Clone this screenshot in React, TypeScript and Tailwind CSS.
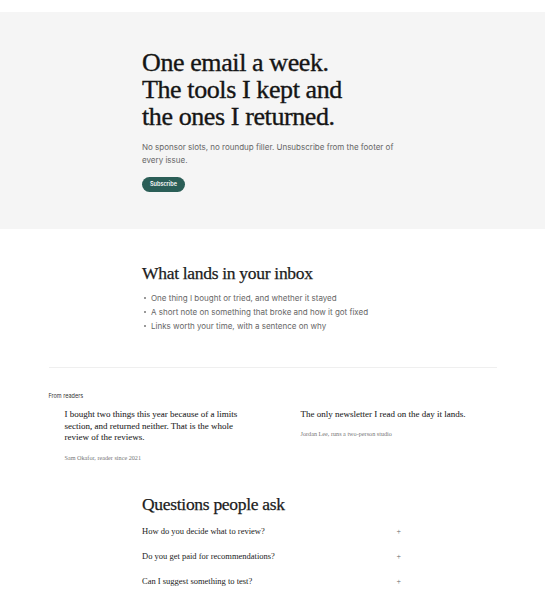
const serif = { fontFamily: '"Liberation Serif", "DejaVu Serif", serif' };

const bullets = [
  "One thing I bought or tried, and whether it stayed",
  "A short note on something that broke and how it got fixed",
  "Links worth your time, with a sentence on why",
];

const quotes = [
  {
    text: "I bought two things this year because of a limits section, and returned neither. That is the whole review of the reviews.",
    who: "Sam Okafor, reader since 2021",
  },
  {
    text: "The only newsletter I read on the day it lands.",
    who: "Jordan Lee, runs a two-person studio",
  },
];

const questions = [
  "How do you decide what to review?",
  "Do you get paid for recommendations?",
  "Can I suggest something to test?",
];

export default function App() {
  return (
    <div className="min-h-screen bg-white pt-[12px] text-[#1c1c1c] font-['Inter','Liberation_Sans',sans-serif]">
      <section className="bg-[#f5f5f5] pt-[37px] pb-[37px]">
        <div className="mx-auto w-[261px]">
          <h1
            style={serif}
            className="h-[81px] text-[26px] leading-[27px] tracking-[-0.4px] text-[#151515] [-webkit-text-stroke:0.35px_#151515]"
          >
            One email a week.
            <br />
            The tools I kept and
            <br />
            the ones I returned.
          </h1>
          <p className="mt-[10.5px] text-[8px] leading-[13px] text-[#666]">
            No sponsor slots, no roundup filler. Unsubscribe from the footer of
            every issue.
          </p>
          <button className="mt-[10.5px] flex h-[15px] items-center rounded-full bg-[#2b5e57] px-[8px] text-[5.5px] font-semibold text-white">
            Subscribe
          </button>
        </div>
      </section>

      <section className="mx-auto w-[261px] pt-[33px]">
        <h2
          style={serif}
          className="text-[17.5px] leading-[22px] tracking-[-0.3px] [-webkit-text-stroke:0.25px_#1c1c1c]"
        >
          What lands in your inbox
        </h2>
        <ul className="mt-[7px] text-[8px] leading-[14px] text-[#666]">
          {bullets.map((b) => (
            <li key={b} className="flex items-center gap-[5px] pl-[2px]">
              <span className="h-[2px] w-[2px] rounded-full bg-[#777]" />
              {b}
            </li>
          ))}
        </ul>
      </section>

      <section className="mx-auto mt-[34px] w-[448px] border-t border-[#efefef] pt-[23.5px]">
        <p className="text-[5.5px] leading-[9px] text-[#333]">From readers</p>
        <div className="mt-[8.5px] grid grid-cols-2 gap-[24px]">
          {quotes.map((q) => (
            <figure key={q.who} className="pl-[16px]" style={serif}>
              <blockquote className="max-w-[185px] text-[9px] leading-[11.7px] text-[#222] [-webkit-text-stroke:0.05px_#222]">
                {q.text}
              </blockquote>
              <figcaption className="mt-[8.5px] text-[6.2px] leading-[9px] text-[#777]">
                {q.who}
              </figcaption>
            </figure>
          ))}
        </div>
      </section>

      <section className="mx-auto w-[261px] pt-[31.5px] pb-[10px]">
        <h2
          style={serif}
          className="text-[17.5px] leading-[22px] tracking-[-0.3px] [-webkit-text-stroke:0.25px_#1c1c1c]"
        >
          Questions people ask
        </h2>
        <div className="mt-[4px]">
          {questions.map((q) => (
            <div
              key={q}
              style={serif}
              className="flex h-[25px] items-center justify-between pr-[2px] text-[8.5px] text-[#222]"
            >
              <span>{q}</span>
              <span className="text-[8px] text-[#666]">+</span>
            </div>
          ))}
        </div>
      </section>
    </div>
  );
}
